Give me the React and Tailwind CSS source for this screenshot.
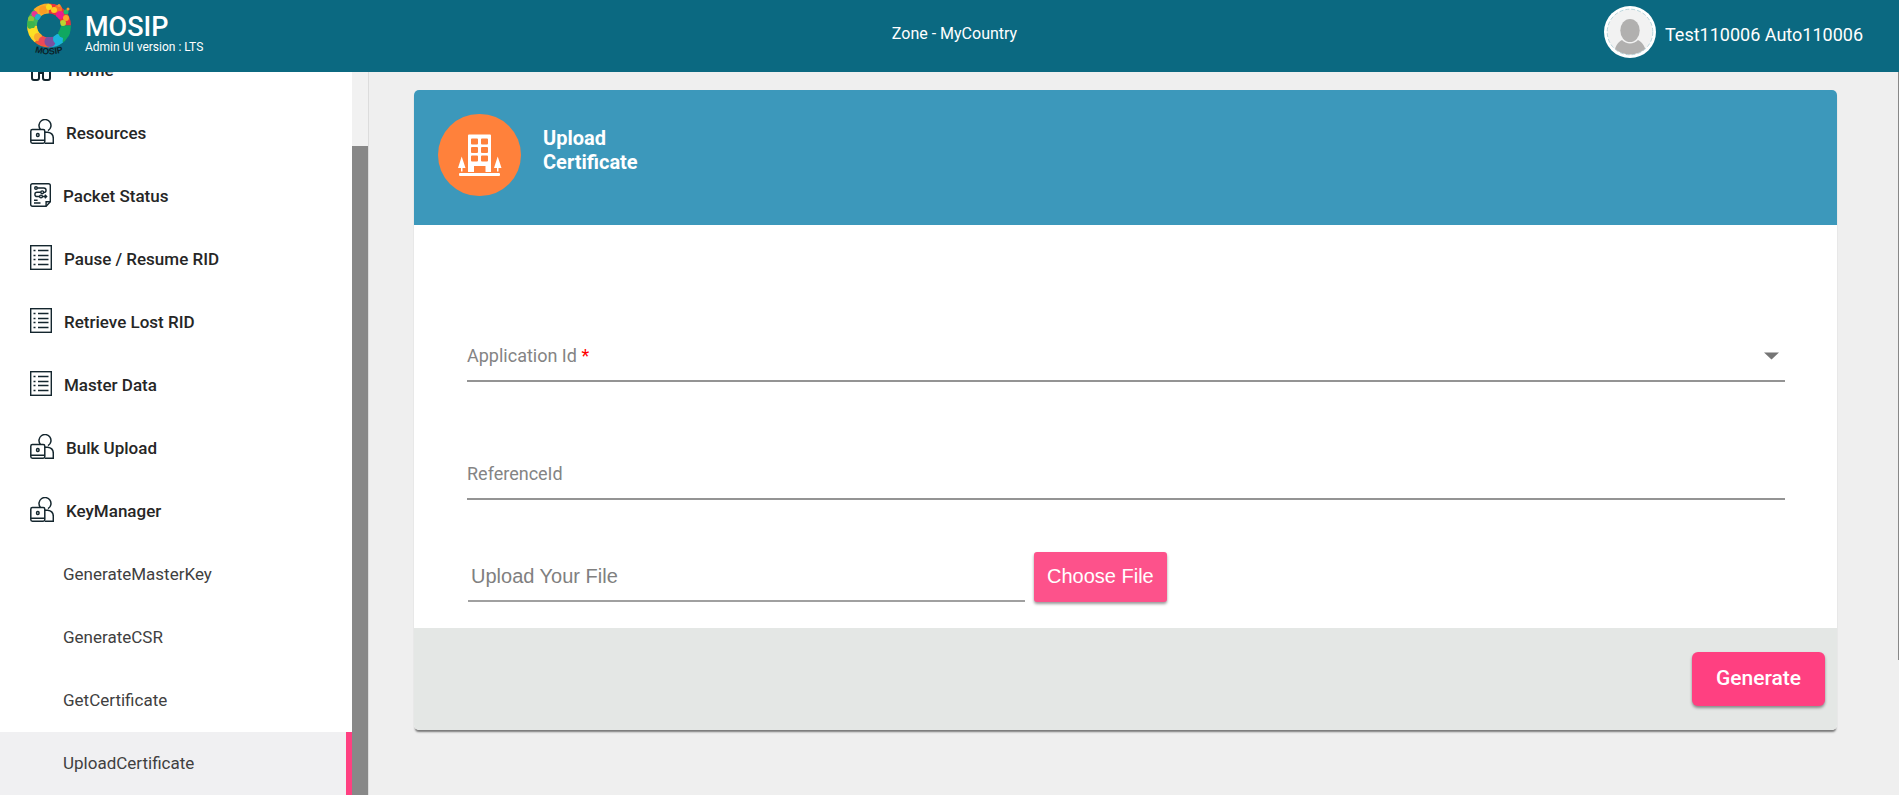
import React from 'react';

const INK = '#14262e';

function HomeIcon() {
  return (
    <svg width="22" height="24" viewBox="0 0 22 24" fill="none" stroke={INK} strokeWidth="2">
      <path d="M1 11 11 2l10 9M2 10v11q0 2 2 2h3q2 0 2-2v-5h4v5q0 2 2 2h3q2 0 2-2V10" />
    </svg>
  );
}

function PersonIcon() {
  return (
    <svg width="24" height="25" viewBox="0 0 24 25" fill="none" stroke={INK} strokeWidth="1.5">
      <path d="M10.4 10.4A6 6 0 1 1 18 11.7" />
      <rect x="0.8" y="10.6" width="14" height="13.6" rx="1.6" />
      <path d="M0.8 21.300h14M14.800 13.200h3q5.500.8 5.500 6v5h-8.500" />
      <rect x="6.600" y="14.600" width="2.400" height="3" rx="1" />
    </svg>
  );
}

function PacketIcon() {
  return (
    <svg width="21" height="24" viewBox="0 0 21 24" fill="none" stroke={INK} strokeWidth="1.4">
      <path d="M2.500 0.700h16q1.800 0 1.800 1.800v16.200l-4.200 4.600H2.500q-1.800 0-1.800-1.800v-19q0-1.800 1.800-1.800Z" />
      <path d="M20.300 18.700h-4.200v4.600" />
      <circle cx="6" cy="5" r="1.300" />
      <path d="M7.300 5h6.500a2.200 2.200 0 0 1 0 4.500h-.2M10.800 9.300H7a2.100 2.100 0 0 0 0 4.200h2.600" />
      <circle cx="12.200" cy="9.300" r="1.400" />
      <circle cx="11" cy="13.500" r="1.400" />
      <path d="M12.400 13.500h4M14.800 11.800l1.800 1.700-1.800 1.700M4 17.300h3.600M4 20h6.500" />
    </svg>
  );
}

function ListIcon() {
  return (
    <svg width="22" height="25" viewBox="0 0 22 25" fill="none" stroke={INK} strokeWidth="1.400">
      <rect x="0.700" y="0.700" width="20.600" height="23.600" />
      <path d="M3.500 5.500h2M8 5.500h10.500M3.500 10.500h2M8 10.500h10.500M3.500 14.500h2M8 14.500h10.500M3.500 19.500h2M8 19.500h10.500" />
    </svg>
  );
}

function Logo() {
  return (
    <svg width="46" height="58" viewBox="0 0 46 58" role="img" aria-label="MOSIP logo">
      <g fill="none" strokeWidth="10">
        <path d="M23 8.500a17 17 0 0 1 17 17" stroke="#e8343c" />
        <path d="M40 25.500a17 17 0 0 1-8 14.500" stroke="#10a860" />
        <path d="M34 38.500a17 17 0 0 1-11 4" stroke="#1cb4dc" />
        <path d="M23 42.500a17 17 0 0 1-12-5" stroke="#f0602c" />
        <path d="M12 38.500a17 17 0 0 1-6-13" stroke="#fcd628" />
        <path d="M6 25.500a17 17 0 0 1 6-13" stroke="#40b85c" />
        <path d="M11 13a17 17 0 0 1 12-4.500" stroke="#fcac28" />
      </g>
      <circle cx="17" cy="10" r="4" fill="#fc9c24" />
      <circle cx="8.500" cy="14" r="3" fill="#e83494" />
      <circle cx="23" cy="7" r="3" fill="#f8dc20" />
      <circle cx="32" cy="9" r="4" fill="#f47428" />
      <circle cx="28" cy="10" r="3" fill="#fccc24" />
      <circle cx="34" cy="15" r="4" fill="#ec1c8c" />
      <circle cx="40" cy="12" r="2.500" fill="#24b868" />
      <circle cx="42" cy="9" r="1.500" fill="#f8982c" />
      <circle cx="28" cy="5.500" r="1.500" fill="#e8343c" />
      <circle cx="33" cy="5.500" r="1.500" fill="#f8982c" />
      <circle cx="40" cy="18" r="3" fill="#fca428" />
      <circle cx="37" cy="23" r="3" fill="#bcd430" />
      <circle cx="12" cy="17" r="3" fill="#24b0cc" />
      <circle cx="5" cy="19" r="3" fill="#8cc43c" />
      <circle cx="5" cy="25" r="4" fill="#3cb44c" />
      <circle cx="7" cy="32" r="4" fill="#fce024" />
      <circle cx="12" cy="37" r="4" fill="#f8ac2c" />
      <circle cx="17" cy="41" r="4.500" fill="#ec4858" />
      <circle cx="24" cy="41.500" r="5.500" fill="#7c50a0" />
      <circle cx="32" cy="39" r="5" fill="#1cb4dc" />
      <circle cx="38" cy="32" r="6" fill="#10a860" />
      <circle cx="23" cy="25.500" r="11.500" fill="#0b6981" />
      <path id="logo-arc" d="M3 50Q23 59 43 50" fill="none" />
      <text fontFamily="Liberation Sans" fontWeight="700" fontSize="9" fill="#0c2228" textAnchor="middle">
        <textPath href="#logo-arc" startOffset="50%">MOSIP</textPath>
      </text>
    </svg>
  );
}

function Avatar() {
  return (
    <svg width="52" height="52" viewBox="0 0 52 52" role="img" aria-label="User">
      <defs>
        <clipPath id="avatar-clip"><circle cx="26" cy="26" r="22.500" /></clipPath>
      </defs>
      <circle cx="26" cy="26" r="26" fill="#fff" />
      <circle cx="26" cy="26" r="22.800" fill="#f2f2f2" stroke="#a8cbd4" strokeWidth="0.800" strokeDasharray="4 2" />
      <g clipPath="url(#avatar-clip)" fill="#b1b0af">
        <ellipse cx="26" cy="24.500" rx="9.700" ry="11.500" />
        <path d="M10 51c0-9 3-14.500 8-17 4 4.500 12 4.500 16 0 5 2.500 8.500 8 8.500 17Z" />
      </g>
    </svg>
  );
}

function BuildingIcon() {
  return (
    <svg width="44" height="42" viewBox="0 0 44 42" fill="#fff">
      <path
        fillRule="evenodd"
        d="M11 0.500h21q1 0 1 1V38h-5.500v-6h-11.500v6H10V1.500q0-1 1-1ZM14 4.500h5q1 0 1 1v4q0 1-1 1h-5q-1 0-1-1v-4q0-1 1-1Zm10 0h5q1 0 1 1v4q0 1-1 1h-5q-1 0-1-1v-4q0-1 1-1ZM14 13h5q1 0 1 1v4q0 1-1 1h-5q-1 0-1-1v-4q0-1 1-1Zm10 0h5q1 0 1 1v4q0 1-1 1h-5q-1 0-1-1v-4q0-1 1-1ZM14 21.500h5q1 0 1 1v4q0 1-1 1h-5q-1 0-1-1v-4q0-1 1-1Zm10 0h5q1 0 1 1v4q0 1-1 1h-5q-1 0-1-1v-4q0-1 1-1Z"
      />
      <path d="M3.700 22.500 7.500 34H4.500v3.500H3V34H0ZM39.700 22.500 43.500 34h-3v3.500H39V34h-3Z" />
      <rect x="1" y="39" width="41" height="3" rx="1" />
    </svg>
  );
}

const menu = [
  { label: 'Home', Icon: HomeIcon, gap: 'gap-4' },
  { label: 'Resources', Icon: PersonIcon, gap: 'gap-3' },
  { label: 'Packet Status', Icon: PacketIcon, gap: 'gap-3' },
  { label: 'Pause / Resume RID', Icon: ListIcon, gap: 'gap-3' },
  { label: 'Retrieve Lost RID', Icon: ListIcon, gap: 'gap-3' },
  { label: 'Master Data', Icon: ListIcon, gap: 'gap-3' },
  { label: 'Bulk Upload', Icon: PersonIcon, gap: 'gap-3' },
  { label: 'KeyManager', Icon: PersonIcon, gap: 'gap-3' },
];

const subMenu = [
  { label: 'GenerateMasterKey' },
  { label: 'GenerateCSR' },
  { label: 'GetCertificate' },
  { label: 'UploadCertificate', active: true },
];

function Sidebar() {
  return (
    <aside className="flex shrink-0 border-r border-[#dcdcdc]">
      <nav className="flex w-[352px] flex-col justify-end overflow-hidden bg-white">
        {menu.map(({ label, Icon, gap }) => (
          <a
            key={label}
            href="#"
            className={`flex h-[63px] shrink-0 items-center pl-[30px] text-[17px] font-medium text-[#262626] ${gap}`}
          >
            <span className="pb-1"><Icon /></span>
            {label}
          </a>
        ))}
        {subMenu.map(({ label, active }) => (
          <a
            key={label}
            href="#"
            aria-current={active ? 'page' : undefined}
            className={`flex h-[63px] shrink-0 items-center pl-[63px] text-[17px] text-[#404040] ${
              active ? 'border-r-6 border-[#ff4081] bg-[#f0f0f2]' : ''
            }`}
          >
            {label}
          </a>
        ))}
      </nav>
      <div className="w-4 bg-[#f1f1f1] pt-[74px]">
        <div className="h-full bg-[#888888]" />
      </div>
    </aside>
  );
}

export default function App() {
  return (
    <div className="flex h-screen flex-col overflow-hidden bg-[#efefef] font-[Roboto,sans-serif]">
      <header className="grid h-[72px] shrink-0 grid-cols-[1fr_auto_1fr] items-start bg-[#0b6981] text-white">
        <div className="flex gap-[13px] pl-[26px]">
          <Logo />
          <div className="pt-[13px]">
            <h1 className="text-[27px] leading-7 font-medium">MOSIP</h1>
            <p className="text-[12px] leading-3">Admin UI version : LTS</p>
          </div>
        </div>
        <p className="pt-[22px] pl-[10px] text-[16px] leading-6">Zone - MyCountry</p>
        <div className="flex items-center justify-end gap-[9px] pt-[6px] pr-9">
          <Avatar />
          <span className="pt-1 text-[18px]">Test110006 Auto110006</span>
        </div>
      </header>

      <div className="flex min-h-0 flex-1">
        <Sidebar />
        <main className="min-w-0 flex-1 pt-[18px] pr-[61px] pl-[45px]">
          <form className="rounded-[5px] bg-white shadow-[0_3px_2px_-1px_rgba(0,0,0,0.5)]" onSubmit={(e) => e.preventDefault()}>
            <div className="flex h-[135px] gap-[22px] rounded-t-[5px] bg-[#3c98bb] pt-6 pl-6">
              <span className="flex h-[82px] w-[83px] items-center justify-center rounded-full bg-[#ff813b]">
                <BuildingIcon />
              </span>
              <h2 className="w-[120px] pt-3 text-[20px] leading-6 font-bold text-white">Upload Certificate</h2>
            </div>

            <div className="px-[52px] pt-[107px] pb-[26px] pl-[53px]">
              <div className="relative border-b-2 border-[#949494]">
                <label htmlFor="application-id" className="pointer-events-none absolute inset-x-0 top-0 text-[18px] leading-[48px] text-[#848484]">
                  Application Id <span className="text-[#ff0000]">*</span>
                </label>
                <select id="application-id" required defaultValue="" className="block h-12 w-full appearance-none bg-transparent outline-none">
                  <option value="" />
                </select>
                <svg className="pointer-events-none absolute top-5 right-[6px]" width="15" height="8" viewBox="0 0 15 8" fill="#757575">
                  <path d="M0 0.500h15L7.500 7.500Z" />
                </svg>
              </div>

              <div className="relative mt-[68px] border-b-2 border-[#949494]">
                <label htmlFor="reference-id" className="pointer-events-none absolute inset-x-0 top-0 text-[18px] leading-[48px] text-[#848484]">
                  ReferenceId
                </label>
                <input id="reference-id" type="text" className="block h-12 w-full bg-transparent outline-none" />
              </div>

              <div className="mt-[52px] flex gap-[9px] pl-px font-['Liberation_Sans',sans-serif] text-[20px]">
                <input
                  type="text"
                  readOnly
                  aria-label="Upload Your File"
                  placeholder="Upload Your File"
                  className="h-[50px] w-[557px] border-b-2 border-[#a0a0a0] px-[3px] outline-none placeholder:text-[#808080]"
                />
                <button type="button" className="h-[50px] rounded-[3px] bg-[#fd528b] px-[13px] pb-[2px] text-white shadow-[0_2px_3px_rgba(0,0,0,0.4)]">
                  Choose File
                </button>
              </div>
            </div>

            <div className="flex justify-end rounded-b-[5px] bg-[#e4e7e5] py-6 pr-3">
              <button type="submit" className="h-[54px] rounded-md bg-[#ff4081] px-6 text-[21px] font-medium text-white shadow-[0_2px_3px_rgba(0,0,0,0.4)]">
                Generate
              </button>
            </div>
          </form>
        </main>
        <div className="h-[588px] w-px shrink-0 bg-[#888888]" />
      </div>
    </div>
  );
}
